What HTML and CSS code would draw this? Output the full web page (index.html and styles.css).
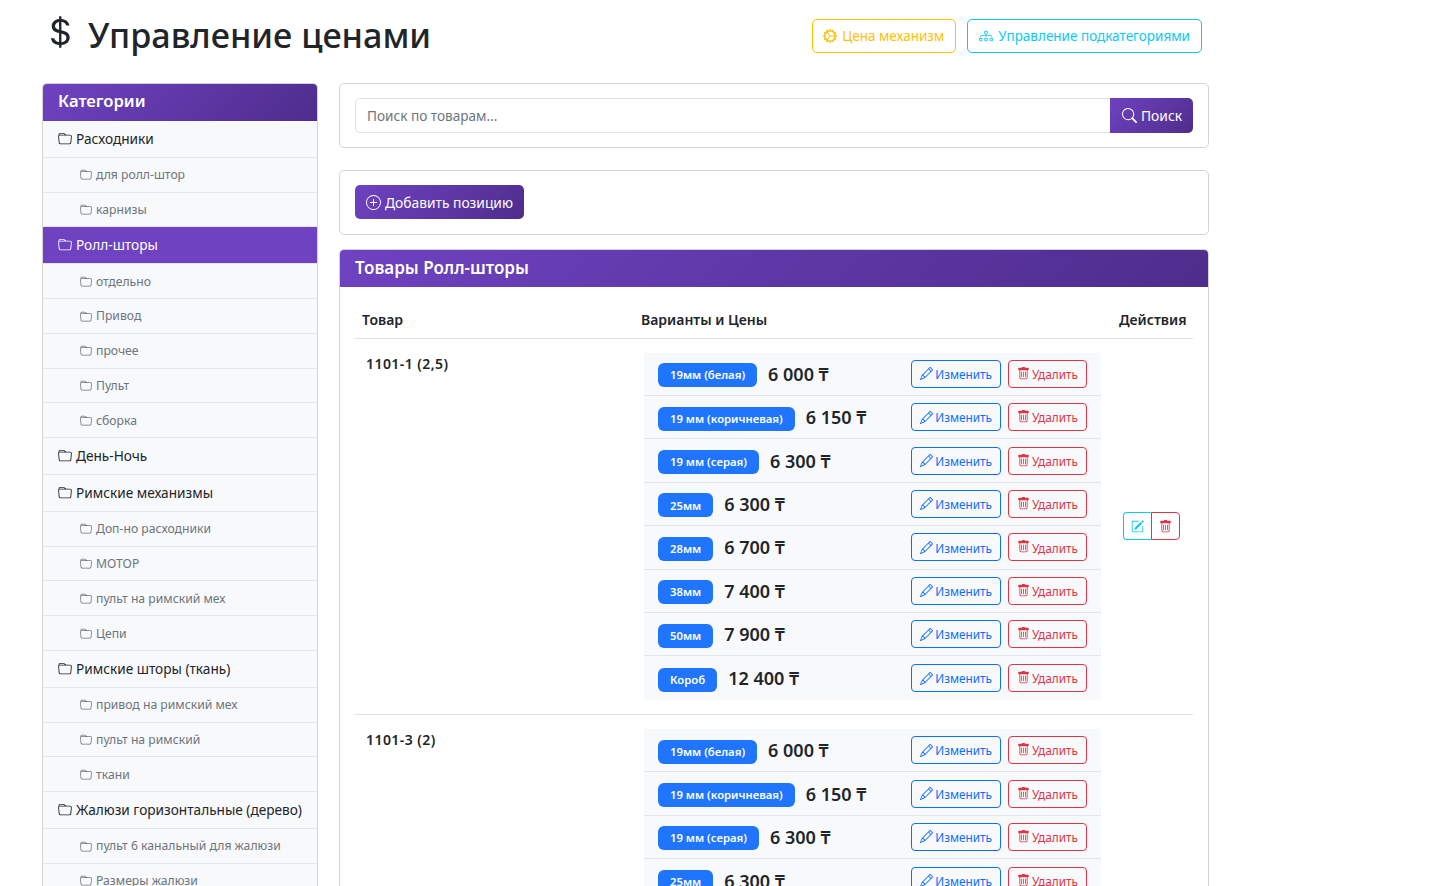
FILE: index.html
```html
<!DOCTYPE html>
<html lang="ru">
<head>
<meta charset="UTF-8">
<title>Управление ценами</title>
<link rel="stylesheet" href="styles.css">
</head>
<body>

<!-- bootstrap-style icons -->
<svg class="sprite" xmlns="http://www.w3.org/2000/svg">
  <symbol id="i-folder" viewBox="0 0 16 16"><path d="M.54 3.87.5 3a2 2 0 0 1 2-2h3.672a2 2 0 0 1 1.414.586l.828.828A2 2 0 0 0 9.828 3h3.982a2 2 0 0 1 1.992 2.181l-.637 7A2 2 0 0 1 13.174 14H2.826a2 2 0 0 1-1.991-1.819l-.637-7a1.99 1.99 0 0 1 .342-1.31zM2.19 4a1 1 0 0 0-.996 1.09l.637 7a1 1 0 0 0 .995.91h10.348a1 1 0 0 0 .995-.91l.637-7A1 1 0 0 0 13.81 4H2.19zm4.69-1.707A1 1 0 0 0 6.172 2H2.5a1 1 0 0 0-1 .981l.006.139C1.72 3.042 1.95 3 2.19 3h5.396l-.707-.707z"/></symbol>
  <symbol id="i-dollar" viewBox="0 0 16 16"><path d="M4 10.781c.148 1.667 1.513 2.85 3.591 3.003V15h1.043v-1.216c2.27-.179 3.678-1.438 3.678-3.3 0-1.59-.947-2.51-2.956-3.028l-.722-.187V3.467c1.122.11 1.879.714 2.07 1.616h1.47c-.166-1.6-1.54-2.748-3.54-2.875V1H7.591v1.233c-1.939.23-3.27 1.472-3.27 3.156 0 1.454.966 2.483 2.661 2.917l.61.162v4.031c-1.149-.17-1.94-.8-2.131-1.718H4zm3.391-3.836c-1.043-.263-1.6-.825-1.6-1.616 0-.944.704-1.641 1.8-1.828v3.495l-.2-.05zm1.591 1.872c1.287.323 1.852.859 1.852 1.769 0 1.097-.826 1.828-2.2 1.939V8.73l.348.086z"/></symbol>
  <symbol id="i-search" viewBox="0 0 16 16"><path d="M11.742 10.344a6.5 6.5 0 1 0-1.397 1.398h-.001c.03.04.062.078.098.115l3.85 3.85a1 1 0 0 0 1.415-1.414l-3.85-3.85a1.007 1.007 0 0 0-.115-.1zM12 6.5a5.5 5.5 0 1 1-11 0 5.5 5.5 0 0 1 11 0z"/></symbol>
  <symbol id="i-plus" viewBox="0 0 16 16"><path d="M8 15A7 7 0 1 1 8 1a7 7 0 0 1 0 14zm0 1A8 8 0 1 0 8 0a8 8 0 0 0 0 16z"/><path d="M8 4a.5.5 0 0 1 .5.5v3h3a.5.5 0 0 1 0 1h-3v3a.5.5 0 0 1-1 0v-3h-3a.5.5 0 0 1 0-1h3v-3A.5.5 0 0 1 8 4z"/></symbol>
  <symbol id="i-pencil" viewBox="0 0 16 16"><path d="M12.146.146a.5.5 0 0 1 .708 0l3 3a.5.5 0 0 1 0 .708l-10 10a.5.5 0 0 1-.168.11l-5 2a.5.5 0 0 1-.65-.65l2-5a.5.5 0 0 1 .11-.168l10-10zM11.207 2.5 13.5 4.793 14.793 3.5 12.5 1.207 11.207 2.5zm1.586 3L10.5 3.207 4 9.707V10h.5a.5.5 0 0 1 .5.5v.5h.5a.5.5 0 0 1 .5.5v.5h.293l6.5-6.5zm-9.761 5.175-.106.106-1.528 3.821 3.821-1.528.106-.106A.5.5 0 0 1 5 12.5V12h-.5a.5.5 0 0 1-.5-.5V11h-.5a.5.5 0 0 1-.468-.325z"/></symbol>
  <symbol id="i-trash" viewBox="0 0 16 16"><path d="M5.5 5.5A.5.5 0 0 1 6 6v6a.5.5 0 0 1-1 0V6a.5.5 0 0 1 .5-.5zm2.5 0a.5.5 0 0 1 .5.5v6a.5.5 0 0 1-1 0V6a.5.5 0 0 1 .5-.5zm3 .5a.5.5 0 0 0-1 0v6a.5.5 0 0 0 1 0V6z"/><path d="M14.5 3a1 1 0 0 1-1 1H13v9a2 2 0 0 1-2 2H5a2 2 0 0 1-2-2V4h-.5a1 1 0 0 1-1-1V2a1 1 0 0 1 1-1H6a1 1 0 0 1 1-1h2a1 1 0 0 1 1 1h3.5a1 1 0 0 1 1 1v1zM4.118 4 4 4.059V13a1 1 0 0 0 1 1h6a1 1 0 0 0 1-1V4.059L11.882 4H4.118zM2.5 3V2h11v1h-11z"/></symbol>
  <symbol id="i-edit" viewBox="0 0 16 16"><path d="M15.502 1.94a.5.5 0 0 1 0 .706L14.459 3.69l-2-2L13.502.646a.5.5 0 0 1 .707 0l1.293 1.293zm-1.75 2.456-2-2L4.939 9.21a.5.5 0 0 0-.121.196l-.805 2.414a.25.25 0 0 0 .316.316l2.414-.805a.5.5 0 0 0 .196-.12l6.813-6.814z"/><path d="M1 13.5A1.5 1.5 0 0 0 2.5 15h11a1.5 1.5 0 0 0 1.5-1.5v-6a.5.5 0 0 0-1 0v6a.5.5 0 0 1-.5.5h-11a.5.5 0 0 1-.5-.5v-11a.5.5 0 0 1 .5-.5H9a.5.5 0 0 0 0-1H2.5A1.5 1.5 0 0 0 1 2.5v11z"/></symbol>
  <symbol id="i-gear" viewBox="0 0 16 16"><path d="M7.068.727c.243-.97 1.62-.97 1.864 0l.071.286a.96.96 0 0 0 1.622.434l.205-.211c.695-.719 1.888-.03 1.613.931l-.08.284a.96.96 0 0 0 1.187 1.187l.283-.081c.96-.275 1.65.918.931 1.613l-.211.205a.96.96 0 0 0 .434 1.622l.286.071c.97.243.97 1.62 0 1.864l-.286.071a.96.96 0 0 0-.434 1.622l.211.205c.719.695.03 1.888-.931 1.613l-.284-.08a.96.96 0 0 0-1.187 1.187l.081.283c.275.96-.918 1.65-1.613.931l-.205-.211a.96.96 0 0 0-1.622.434l-.071.286c-.243.97-1.62.97-1.864 0l-.071-.286a.96.96 0 0 0-1.622-.434l-.205.211c-.695.719-1.888.03-1.613-.931l.08-.284a.96.96 0 0 0-1.186-1.187l-.284.081c-.96.275-1.65-.918-.931-1.613l.211-.205a.96.96 0 0 0-.434-1.622l-.286-.071c-.97-.243-.97-1.62 0-1.864l.286-.071a.96.96 0 0 0 .434-1.622l-.211-.205c-.719-.695-.03-1.888.931-1.613l.284.08a.96.96 0 0 0 1.187-1.186l-.081-.284c-.275-.96.918-1.65 1.613-.931l.205.211a.96.96 0 0 0 1.622-.434l.071-.286zM12.973 8.5H8.25l-2.834 3.779A4.998 4.998 0 0 0 12.973 8.5zm0-1a4.998 4.998 0 0 0-7.557-3.779l2.834 3.78h4.723zM5.048 3.967c-.03.021-.058.043-.087.065l.087-.065zm-.431.355A4.984 4.984 0 0 0 3.002 8c0 1.455.622 2.765 1.615 3.678L7.375 8 4.617 4.322zm.344 7.646.087.065-.087-.065z"/></symbol>
  <symbol id="i-diagram" viewBox="0 0 16 16"><path d="M6 3.5A1.5 1.5 0 0 1 7.5 2h1A1.5 1.5 0 0 1 10 3.5v1A1.5 1.5 0 0 1 8.5 6v1H14a.5.5 0 0 1 .5.5v1a.5.5 0 0 1-1 0V8h-5v.5a.5.5 0 0 1-1 0V8h-5v.5a.5.5 0 0 1-1 0v-1A.5.5 0 0 1 2 7h5.5V6A1.5 1.5 0 0 1 6 4.5v-1zM8.5 5a.5.5 0 0 0 .5-.5v-1a.5.5 0 0 0-.5-.5h-1a.5.5 0 0 0-.5.5v1a.5.5 0 0 0 .5.5h1zM0 11.5A1.5 1.5 0 0 1 1.5 10h1A1.5 1.5 0 0 1 4 11.5v1A1.5 1.5 0 0 1 2.5 14h-1A1.5 1.5 0 0 1 0 12.5v-1zm1.5-.5a.5.5 0 0 0-.5.5v1a.5.5 0 0 0 .5.5h1a.5.5 0 0 0 .5-.5v-1a.5.5 0 0 0-.5-.5h-1zm4.5.5A1.5 1.5 0 0 1 7.5 10h1a1.5 1.5 0 0 1 1.5 1.5v1A1.5 1.5 0 0 1 8.5 14h-1A1.5 1.5 0 0 1 6 12.5v-1zm1.5-.5a.5.5 0 0 0-.5.5v1a.5.5 0 0 0 .5.5h1a.5.5 0 0 0 .5-.5v-1a.5.5 0 0 0-.5-.5h-1zm4.5.5a1.5 1.5 0 0 1 1.5-1.5h1a1.5 1.5 0 0 1 1.5 1.5v1a1.5 1.5 0 0 1-1.5 1.5h-1a1.5 1.5 0 0 1-1.5-1.5v-1zm1.5-.5a.5.5 0 0 0-.5.5v1a.5.5 0 0 0 .5.5h1a.5.5 0 0 0 .5-.5v-1a.5.5 0 0 0-.5-.5h-1z"/></symbol>
</svg>

<div class="page">

  <header class="top">
    <h1><svg class="ico h1-ico"><use href="#i-dollar"/></svg>Управление ценами</h1>
    <div class="top-btns">
      <a class="btn btn-yellow"><svg class="ico"><use href="#i-gear"/></svg>Цена механизм</a>
      <a class="btn btn-cyan"><svg class="ico"><use href="#i-diagram"/></svg>Управление подкатегориями</a>
    </div>
  </header>

  <div class="layout">

    <!-- Категории -->
    <aside class="cats">
      <div class="cats-head">Категории</div>
      <a class="cat"><svg class="ico"><use href="#i-folder"/></svg>Расходники</a>
      <a class="sub"><svg class="ico"><use href="#i-folder"/></svg>для ролл-штор</a>
      <a class="sub"><svg class="ico"><use href="#i-folder"/></svg>карнизы</a>
      <a class="cat active"><svg class="ico"><use href="#i-folder"/></svg>Ролл-шторы</a>
      <a class="sub"><svg class="ico"><use href="#i-folder"/></svg>отдельно</a>
      <a class="sub"><svg class="ico"><use href="#i-folder"/></svg>Привод</a>
      <a class="sub"><svg class="ico"><use href="#i-folder"/></svg>прочее</a>
      <a class="sub"><svg class="ico"><use href="#i-folder"/></svg>Пульт</a>
      <a class="sub"><svg class="ico"><use href="#i-folder"/></svg>сборка</a>
      <a class="cat"><svg class="ico"><use href="#i-folder"/></svg>День-Ночь</a>
      <a class="cat"><svg class="ico"><use href="#i-folder"/></svg>Римские механизмы</a>
      <a class="sub"><svg class="ico"><use href="#i-folder"/></svg>Доп-но расходники</a>
      <a class="sub"><svg class="ico"><use href="#i-folder"/></svg>МОТОР</a>
      <a class="sub"><svg class="ico"><use href="#i-folder"/></svg>пульт на римский мех</a>
      <a class="sub"><svg class="ico"><use href="#i-folder"/></svg>Цепи</a>
      <a class="cat"><svg class="ico"><use href="#i-folder"/></svg>Римские шторы (ткань)</a>
      <a class="sub"><svg class="ico"><use href="#i-folder"/></svg>привод на римский мех</a>
      <a class="sub"><svg class="ico"><use href="#i-folder"/></svg>пульт на римский</a>
      <a class="sub"><svg class="ico"><use href="#i-folder"/></svg>ткани</a>
      <a class="cat"><svg class="ico"><use href="#i-folder"/></svg>Жалюзи горизонтальные (дерево)</a>
      <a class="sub"><svg class="ico"><use href="#i-folder"/></svg>пульт 6 канальный для жалюзи</a>
      <a class="sub"><svg class="ico"><use href="#i-folder"/></svg>Размеры жалюзи</a>
    </aside>

    <main class="content">

      <div class="card card-pad card-search">
        <form class="search">
          <input class="search-input" type="text" placeholder="Поиск по товарам...">
          <button class="btn-purple search-btn" type="button"><svg class="ico"><use href="#i-search"/></svg>Поиск</button>
        </form>
      </div>

      <div class="card card-pad card-add">
        <button class="btn-purple add-btn" type="button"><svg class="ico"><use href="#i-plus"/></svg>Добавить позицию</button>
      </div>

      <div class="card">
        <div class="card-head">Товары Ролл-шторы</div>
        <div class="card-body">
          <table class="goods">
            <thead>
              <tr>
                <th class="col-name">Товар</th>
                <th class="col-vars">Варианты и Цены</th>
                <th class="col-acts">Действия</th>
              </tr>
            </thead>
            <tbody>
              <tr>
                <td class="name">1101-1 (2,5)</td>
                <td class="vars">
                  <ul class="var-list">
                    <li class="var"><span class="badge">19мм (белая)</span><span class="price">6 000 ₸</span><span class="var-btns"><a class="btn-sm btn-blue"><svg class="ico"><use href="#i-pencil"/></svg>Изменить</a><a class="btn-sm btn-red"><svg class="ico"><use href="#i-trash"/></svg>Удалить</a></span></li>
                    <li class="var"><span class="badge">19 мм (коричневая)</span><span class="price">6 150 ₸</span><span class="var-btns"><a class="btn-sm btn-blue"><svg class="ico"><use href="#i-pencil"/></svg>Изменить</a><a class="btn-sm btn-red"><svg class="ico"><use href="#i-trash"/></svg>Удалить</a></span></li>
                    <li class="var"><span class="badge">19 мм (серая)</span><span class="price">6 300 ₸</span><span class="var-btns"><a class="btn-sm btn-blue"><svg class="ico"><use href="#i-pencil"/></svg>Изменить</a><a class="btn-sm btn-red"><svg class="ico"><use href="#i-trash"/></svg>Удалить</a></span></li>
                    <li class="var"><span class="badge">25мм</span><span class="price">6 300 ₸</span><span class="var-btns"><a class="btn-sm btn-blue"><svg class="ico"><use href="#i-pencil"/></svg>Изменить</a><a class="btn-sm btn-red"><svg class="ico"><use href="#i-trash"/></svg>Удалить</a></span></li>
                    <li class="var"><span class="badge">28мм</span><span class="price">6 700 ₸</span><span class="var-btns"><a class="btn-sm btn-blue"><svg class="ico"><use href="#i-pencil"/></svg>Изменить</a><a class="btn-sm btn-red"><svg class="ico"><use href="#i-trash"/></svg>Удалить</a></span></li>
                    <li class="var"><span class="badge">38мм</span><span class="price">7 400 ₸</span><span class="var-btns"><a class="btn-sm btn-blue"><svg class="ico"><use href="#i-pencil"/></svg>Изменить</a><a class="btn-sm btn-red"><svg class="ico"><use href="#i-trash"/></svg>Удалить</a></span></li>
                    <li class="var"><span class="badge">50мм</span><span class="price">7 900 ₸</span><span class="var-btns"><a class="btn-sm btn-blue"><svg class="ico"><use href="#i-pencil"/></svg>Изменить</a><a class="btn-sm btn-red"><svg class="ico"><use href="#i-trash"/></svg>Удалить</a></span></li>
                    <li class="var"><span class="badge">Короб</span><span class="price">12 400 ₸</span><span class="var-btns"><a class="btn-sm btn-blue"><svg class="ico"><use href="#i-pencil"/></svg>Изменить</a><a class="btn-sm btn-red"><svg class="ico"><use href="#i-trash"/></svg>Удалить</a></span></li>
                  </ul>
                </td>
                <td class="acts">
                  <div class="btn-group"><a class="grp-btn grp-cyan"><svg class="ico"><use href="#i-edit"/></svg></a><a class="grp-btn grp-red"><svg class="ico"><use href="#i-trash"/></svg></a></div>
                </td>
              </tr>
              <tr>
                <td class="name">1101-3 (2)</td>
                <td class="vars">
                  <ul class="var-list">
                    <li class="var"><span class="badge">19мм (белая)</span><span class="price">6 000 ₸</span><span class="var-btns"><a class="btn-sm btn-blue"><svg class="ico"><use href="#i-pencil"/></svg>Изменить</a><a class="btn-sm btn-red"><svg class="ico"><use href="#i-trash"/></svg>Удалить</a></span></li>
                    <li class="var"><span class="badge">19 мм (коричневая)</span><span class="price">6 150 ₸</span><span class="var-btns"><a class="btn-sm btn-blue"><svg class="ico"><use href="#i-pencil"/></svg>Изменить</a><a class="btn-sm btn-red"><svg class="ico"><use href="#i-trash"/></svg>Удалить</a></span></li>
                    <li class="var"><span class="badge">19 мм (серая)</span><span class="price">6 300 ₸</span><span class="var-btns"><a class="btn-sm btn-blue"><svg class="ico"><use href="#i-pencil"/></svg>Изменить</a><a class="btn-sm btn-red"><svg class="ico"><use href="#i-trash"/></svg>Удалить</a></span></li>
                    <li class="var"><span class="badge">25мм</span><span class="price">6 300 ₸</span><span class="var-btns"><a class="btn-sm btn-blue"><svg class="ico"><use href="#i-pencil"/></svg>Изменить</a><a class="btn-sm btn-red"><svg class="ico"><use href="#i-trash"/></svg>Удалить</a></span></li>
                  </ul>
                </td>
                <td class="acts"></td>
              </tr>
            </tbody>
          </table>
        </div>
      </div>

    </main>
  </div>
</div>

</body>
</html>
```

FILE: styles.css
```css
* {
  margin: 0;
  padding: 0;
  box-sizing: border-box;
}

html, body {
  height: 886px;
  overflow: hidden;
}

body {
  font-family: "Noto Sans", "Open Sans", sans-serif;
  font-size: 14px;
  line-height: 1.5;
  background: #fff;
  color: #212529;
}

a {
  text-decoration: none;
  color: inherit;
}

.sprite {
  display: none;
}

.ico {
  width: 1em;
  height: 1em;
  fill: currentColor;
  flex: none;
}

.page {
  width: 1167px;
  margin-left: 42px;
}

/* шапка */
.top {
  height: 83px;
  padding: 19px 7px 0 8px;
  display: flex;
  justify-content: space-between;
  align-items: flex-start;
}

h1 {
  font-size: 34.2px;
  font-weight: 500;
  line-height: 30px;
  display: flex;
  align-items: center;
}

.h1-ico {
  width: 36px;
  height: 36px;
  margin: -5px 10px 0 -8px;
}

.top-btns {
  display: flex;
  gap: 11px;
}

.btn {
  height: 34px;
  padding: 0 11px 0 10px;
  display: flex;
  align-items: center;
  gap: 5px;
  font-size: 13.5px;
  border: 1px solid;
  border-radius: 5px;
}

.btn .ico {
  width: 14px;
  height: 14px;
}

.btn-yellow {
  color: #ffc107;
  border-color: #ffc107;
}

.btn-cyan {
  padding-left: 11px;
  color: #0dcaf0;
  border-color: #0dcaf0;
}

.layout {
  display: grid;
  grid-template-columns: 276px 870px;
  gap: 21px;
  align-items: start;
}

/* категории */
.cats {
  border: 1px solid #d4d4d7;
  border-radius: 5px;
  background: #f8f9fa;
  overflow: hidden;
}

.cats-head, .card-head {
  height: 37px;
  padding: 0 15px 2px;
  display: flex;
  align-items: center;
  font-size: 16.6px;
  font-weight: 600;
  color: #fff;
  background: linear-gradient(135deg, #6f42c1, #4e2d8c);
}

.card-head {
  font-size: 17px;
}

.cat, .sub {
  display: flex;
  align-items: center;
  border-bottom: 1px solid #e3e5e8;
}

.cat {
  height: 36.8px;
  padding-left: 15px;
  gap: 4px;
  font-size: 13.65px;
  color: #212529;
}

.cat .ico {
  width: 14px;
  height: 14px;
}

.cat.active {
  background: #6f42c1;
  color: #fff;
}

.sub {
  height: 34.8px;
  padding: 1.5px 0 0 37px;
  gap: 4px;
  font-size: 12.2px;
  color: #6c757d;
}

.sub .ico {
  width: 12px;
  height: 12px;
}

/* карточки */
.content {
  display: flex;
  flex-direction: column;
}

.card {
  border: 1px solid #d4d4d7;
  border-radius: 5px;
  overflow: hidden;
}

.card-search {
  margin-bottom: 22px;
}

.card-add {
  margin-bottom: 14px;
}

.card-pad {
  padding: 14px 15px;
  height: 65px;
}

.search {
  display: flex;
  height: 35px;
}

.search-input {
  flex: 1;
  border: 1px solid #dee2e6;
  border-right: 0;
  border-radius: 5px 0 0 5px;
  padding: 0 11px;
  font: 13.6px "Noto Sans", "Open Sans", sans-serif;
  color: #212529;
  outline: none;
}

.search-input::placeholder {
  color: #6c757d;
}

.btn-purple {
  display: flex;
  align-items: center;
  gap: 4px;
  border: 0;
  color: #fff;
  font: 13.8px "Noto Sans", "Open Sans", sans-serif;
  background: linear-gradient(135deg, #6f42c1, #4e2d8c);
}

.btn-purple .ico {
  width: 15px;
  height: 15px;
}

.search-btn {
  width: 83px;
  padding-left: 12px;
  border-radius: 0 5px 5px 0;
}

.add-btn {
  height: 34px;
  width: 169px;
  padding-left: 11px;
  border-radius: 5px;
}

.card-body {
  padding: 15px;
}

/* таблица товаров */
.goods {
  width: 838px;
  border-collapse: collapse;
  table-layout: fixed;
}

.goods th {
  height: 36px;
  padding: 0 7px;
  text-align: left;
  font-size: 14px;
  font-weight: 600;
  border-bottom: 1px solid #dee2e6;
}

.col-name {
  width: 278px;
}

.col-acts {
  width: 81px;
}

.goods th.col-vars {
  padding-left: 8px;
}

.goods th.col-acts {
  padding-right: 0;
}

.goods td {
  padding: 14px 11px;
  vertical-align: top;
  border-bottom: 1px solid #dee2e6;
}

.goods td.name {
  font-size: 14px;
  font-weight: 600;
  line-height: 21px;
  letter-spacing: 0.45px;
}

.goods td.acts {
  text-align: left;
  vertical-align: middle;
  padding: 0 0 0 11px;
}

.var-list {
  list-style: none;
  background: #f8f9fa;
}

.var {
  height: 43.43px;
  padding: 0 14px;
  display: flex;
  align-items: center;
  border-bottom: 1px solid #e3e5e8;
}

.var:last-child {
  border-bottom: 0;
}

.badge {
  height: 24px;
  margin-top: 3px;
  padding: 1px 12px 0;
  display: flex;
  align-items: center;
  font-size: 11.3px;
  font-weight: 600;
  color: #fff;
  background: #1f75fe;
  border-radius: 6px;
}

.price {
  margin: 1px 0 0 11px;
  font-size: 18px;
  font-weight: 600;
}

.var-btns {
  margin-left: auto;
  display: flex;
  gap: 7px;
}

.btn-sm {
  height: 28px;
  padding: 2px 8px 0;
  display: flex;
  align-items: center;
  gap: 2px;
  font-size: 11.8px;
  border: 1px solid;
  border-radius: 4px;
}

.btn-sm .ico {
  width: 13px;
  height: 13px;
  margin-top: -2px;
}

.btn-red .ico {
  margin-top: -3px;
}

.btn-blue {
  color: #0d6efd;
  border-color: #0d6efd;
}

.btn-red {
  color: #dc3545;
  border-color: #dc3545;
}

.btn-group {
  display: inline-flex;
  vertical-align: middle;
}

.grp-btn {
  height: 28px;
  display: flex;
  align-items: center;
  justify-content: center;
  font-size: 13px;
  border: 1px solid;
}

.grp-cyan {
  width: 28px;
  color: #0dcaf0;
  border-color: #0dcaf0;
  border-right: 0;
  border-radius: 4px 0 0 4px;
}

.grp-red {
  width: 29px;
  color: #dc3545;
  border-color: #dc3545;
  border-radius: 0 4px 4px 0;
}
```
